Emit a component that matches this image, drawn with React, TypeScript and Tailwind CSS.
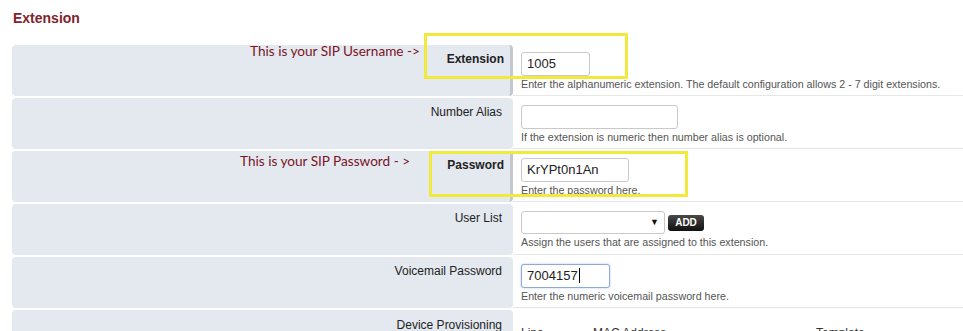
import React from "react";

type Row = {
  label: string;
  required?: boolean;
  note?: string;
  help?: string;
  field: React.ReactNode;
  box?: string;
};

const Field = ({ value, width, focus }: { value?: string; width: string; focus?: boolean }) => (
  <div
    className={`h-[24px] ${width} rounded-[3px] border bg-white px-[5px] text-[13px] leading-[22px] text-[#222] ${
      focus ? "border-[#8eaadb] shadow-[0_0_2px_#a9c1ea]" : "border-[#c9c9c9]"
    }`}
  >
    {value}
    {focus && <span className="ml-px inline-block h-[15px] w-px translate-y-[3px] bg-black" />}
  </div>
);

const rows: Row[] = [
  {
    label: "Extension",
    required: true,
    note: "This is your SIP Username ->",
    help: "Enter the alphanumeric extension. The default configuration allows 2 - 7 digit extensions.",
    field: <Field value="1005" width="w-[69px]" />,
    box: "top-[-12px] left-[412px] w-[204px] h-[46px]",
  },
  {
    label: "Number Alias",
    help: "If the extension is numeric then number alias is optional.",
    field: <Field width="w-[157px]" />,
  },
  {
    label: "Password",
    required: true,
    note: "This is your SIP Password - >",
    help: "Enter the password here.",
    field: <Field value="KrYPt0n1An" width="w-[108px]" />,
    box: "top-0 left-[417px] w-[259px] h-[46px]",
  },
  {
    label: "User List",
    help: "Assign the users that are assigned to this extension.",
    field: (
      <div className="flex items-center gap-[3px]">
        <div className="flex h-[23px] w-[144px] items-center justify-end rounded-[3px] border border-[#c9c9c9] bg-white pr-[5px] text-[9px] text-[#111]">
          ▼
        </div>
        <div className="flex h-[16px] w-[36px] items-center justify-center rounded-[3px] bg-gradient-to-b from-[#4a4a4a] to-[#111] text-[10px] font-bold text-white">
          ADD
        </div>
      </div>
    ),
  },
  {
    label: "Voicemail Password",
    help: "Enter the numeric voicemail password here.",
    field: <Field value="7004157" width="w-[89px]" focus />,
  },
];

export default function App() {
  return (
    <div className="min-h-screen bg-white pl-[12px] font-['Liberation_Sans',Arial,sans-serif]">
      <h2 className="pt-[10px] pl-px text-[14px] font-bold leading-[17px] text-[#80242b]">Extension</h2>
      <div className="mt-[18px] flex flex-col gap-[2px]">
        {rows.map((r) => (
          <div key={r.label} className="relative flex h-[51px]">
            <div
              className={`w-[501px] shrink-0 rounded-[4px] bg-[#e4e8ef] pt-[7px] text-right text-[12px] leading-[14px] text-[#222] ${
                r.required ? "border-r-[3px] border-[#c4c7cc] pr-[6px] font-bold" : "pr-[11px]"
              }`}
            >
              {r.label}
            </div>
            <div className="flex-1 border-b border-[#e6e6e6] pt-[7px] pl-[8px]">
              {r.field}
              <p className="mt-[2px] text-[10.7px] leading-[13px] text-[#555]">{r.help}</p>
            </div>
            {r.note && (
              <span
                className={`absolute font-['Lato',sans-serif] text-[13.6px] leading-[16px] text-[#7a1426] ${
                  r.label === "Extension" ? "top-[-2px] left-[238px]" : "top-[2px] left-[228px]"
                }`}
              >
                {r.note}
              </span>
            )}
            {r.box && <div className={`absolute border-[3px] border-[#f1ea3c] ${r.box}`} />}
          </div>
        ))}
        <div className="relative flex h-[51px]">
          <div className="w-[501px] shrink-0 rounded-[4px] bg-[#e4e8ef] pt-[8px] pr-[11px] text-right text-[12px] leading-[14px] text-[#222]">
            Device Provisioning
          </div>
          <div className="flex flex-1 pt-[16px] pl-[8px] text-[12px] leading-[14px] text-[#333]">
            <span className="w-[72px]">Line</span>
            <span className="w-[223px]">MAC Address</span>
            <span>Template</span>
          </div>
        </div>
      </div>
    </div>
  );
}
